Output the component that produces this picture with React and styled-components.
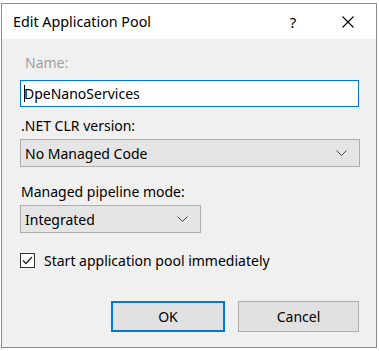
import React from 'react'
import styled, { createGlobalStyle } from 'styled-components'

const Global = createGlobalStyle`
  html, body { margin: 0; padding: 0; background: #fff; }
  body { font-family: "Noto Sans", "Open Sans", sans-serif; }
`

const Page = styled.div`
  width: 379px;
  height: 351px;
  padding: 3px 0 0 1px;
  box-sizing: border-box;
  background: #fff;
  overflow: hidden;
`

const Window = styled.div`
  width: 376px;
  height: 345px;
  box-sizing: border-box;
  border: 1px solid #8c8c8c;
  background: #f0f0f0;
  display: flex;
  flex-direction: column;
`

const TitleBar = styled.div`
  height: 35px;
  background: #fff;
  display: flex;
  align-items: center;
  padding-left: 11px;
  font-size: 14.3px;
  color: #000;
`

const Title = styled.div`
  flex: 1;
`

const TitleButton = styled.div`
  width: ${p => p.$w}px;
  display: flex;
  justify-content: center;
  align-items: center;
  font-size: 15px;
`

const Body = styled.div`
  padding: 15px 17px 0 18px;
  display: flex;
  flex-direction: column;
`

const Label = styled.div`
  font-size: 14px;
  line-height: 18px;
  color: ${p => (p.$disabled ? '#a0a0a0' : '#000')};
  padding-left: ${p => (p.$indent ? 5 : 1)}px;
  margin-top: ${p => p.$mt || 0}px;
  margin-bottom: ${p => p.$mb || 4}px;
`

const TextBox = styled.div`
  height: 27px;
  box-sizing: border-box;
  border: 1px solid #0078d7;
  background: #fff;
  display: flex;
  align-items: center;
  padding-left: 3px;
  font-size: 14px;
  color: #000;
`

const Caret = styled.span`
  display: inline-block;
  width: 1px;
  height: 17px;
  background: #000;
  margin-right: -1px;
`

const Select = styled.div`
  width: ${p => p.$w}px;
  height: 28px;
  box-sizing: border-box;
  border: 1px solid #adadad;
  background: #e5e5e5;
  display: flex;
  align-items: center;
  justify-content: space-between;
  padding: 0 12px 0 4px;
  font-size: 14px;
  color: #000;
`

const CheckRow = styled.div`
  display: flex;
  align-items: center;
  gap: 9px;
  margin-top: 18px;
  font-size: 14px;
  color: #000;
`

const Box = styled.div`
  width: 13px;
  height: 13px;
  border: 1px solid #333;
  background: #fff;
  display: flex;
  align-items: center;
  justify-content: center;
`

const Buttons = styled.div`
  display: flex;
  justify-content: flex-end;
  gap: 13px;
  margin-top: 31px;
`

const Button = styled.div`
  width: ${p => p.$w}px;
  height: 31px;
  box-sizing: border-box;
  border: ${p => (p.$default ? '2px solid #0078d7' : '1px solid #adadad')};
  background: #e1e1e1;
  display: flex;
  align-items: center;
  justify-content: center;
  font-size: 14px;
  color: #000;
`

const Chevron = () => (
  <svg width="11" height="7" viewBox="0 0 11 7">
    <polyline points="0.5,0.5 5.5,5.5 10.5,0.5" fill="none" stroke="#444" strokeWidth="1" />
  </svg>
)

const App = () => (
  <Page>
    <Global />
    <Window>
      <TitleBar>
        <Title>Edit Application Pool</Title>
        <TitleButton $w={54}>?</TitleButton>
        <TitleButton $w={56}>
          <svg width="12" height="12" viewBox="0 0 12 12">
            <path d="M0.5 0.5 L11.5 11.5 M11.5 0.5 L0.5 11.5" stroke="#000" strokeWidth="1.1" />
          </svg>
        </TitleButton>
      </TitleBar>
      <Body>
        <Label $disabled $indent $mb={8}>Name:</Label>
        <TextBox>
          <Caret />
          DpeNanoServices
        </TextBox>
        <Label $mt={10}>.NET CLR version:</Label>
        <Select $w={340}>
          No Managed Code
          <Chevron />
        </Select>
        <Label $mt={16}>Managed pipeline mode:</Label>
        <Select $w={181}>
          Integrated
          <Chevron />
        </Select>
        <CheckRow>
          <Box>
            <svg width="11" height="9" viewBox="0 0 11 9">
              <polyline points="1,4.5 4,7.5 10,1" fill="none" stroke="#222" strokeWidth="1.3" />
            </svg>
          </Box>
          Start application pool immediately
        </CheckRow>
        <Buttons>
          <Button $w={114} $default>OK</Button>
          <Button $w={121}>Cancel</Button>
        </Buttons>
      </Body>
    </Window>
  </Page>
)

export default App
